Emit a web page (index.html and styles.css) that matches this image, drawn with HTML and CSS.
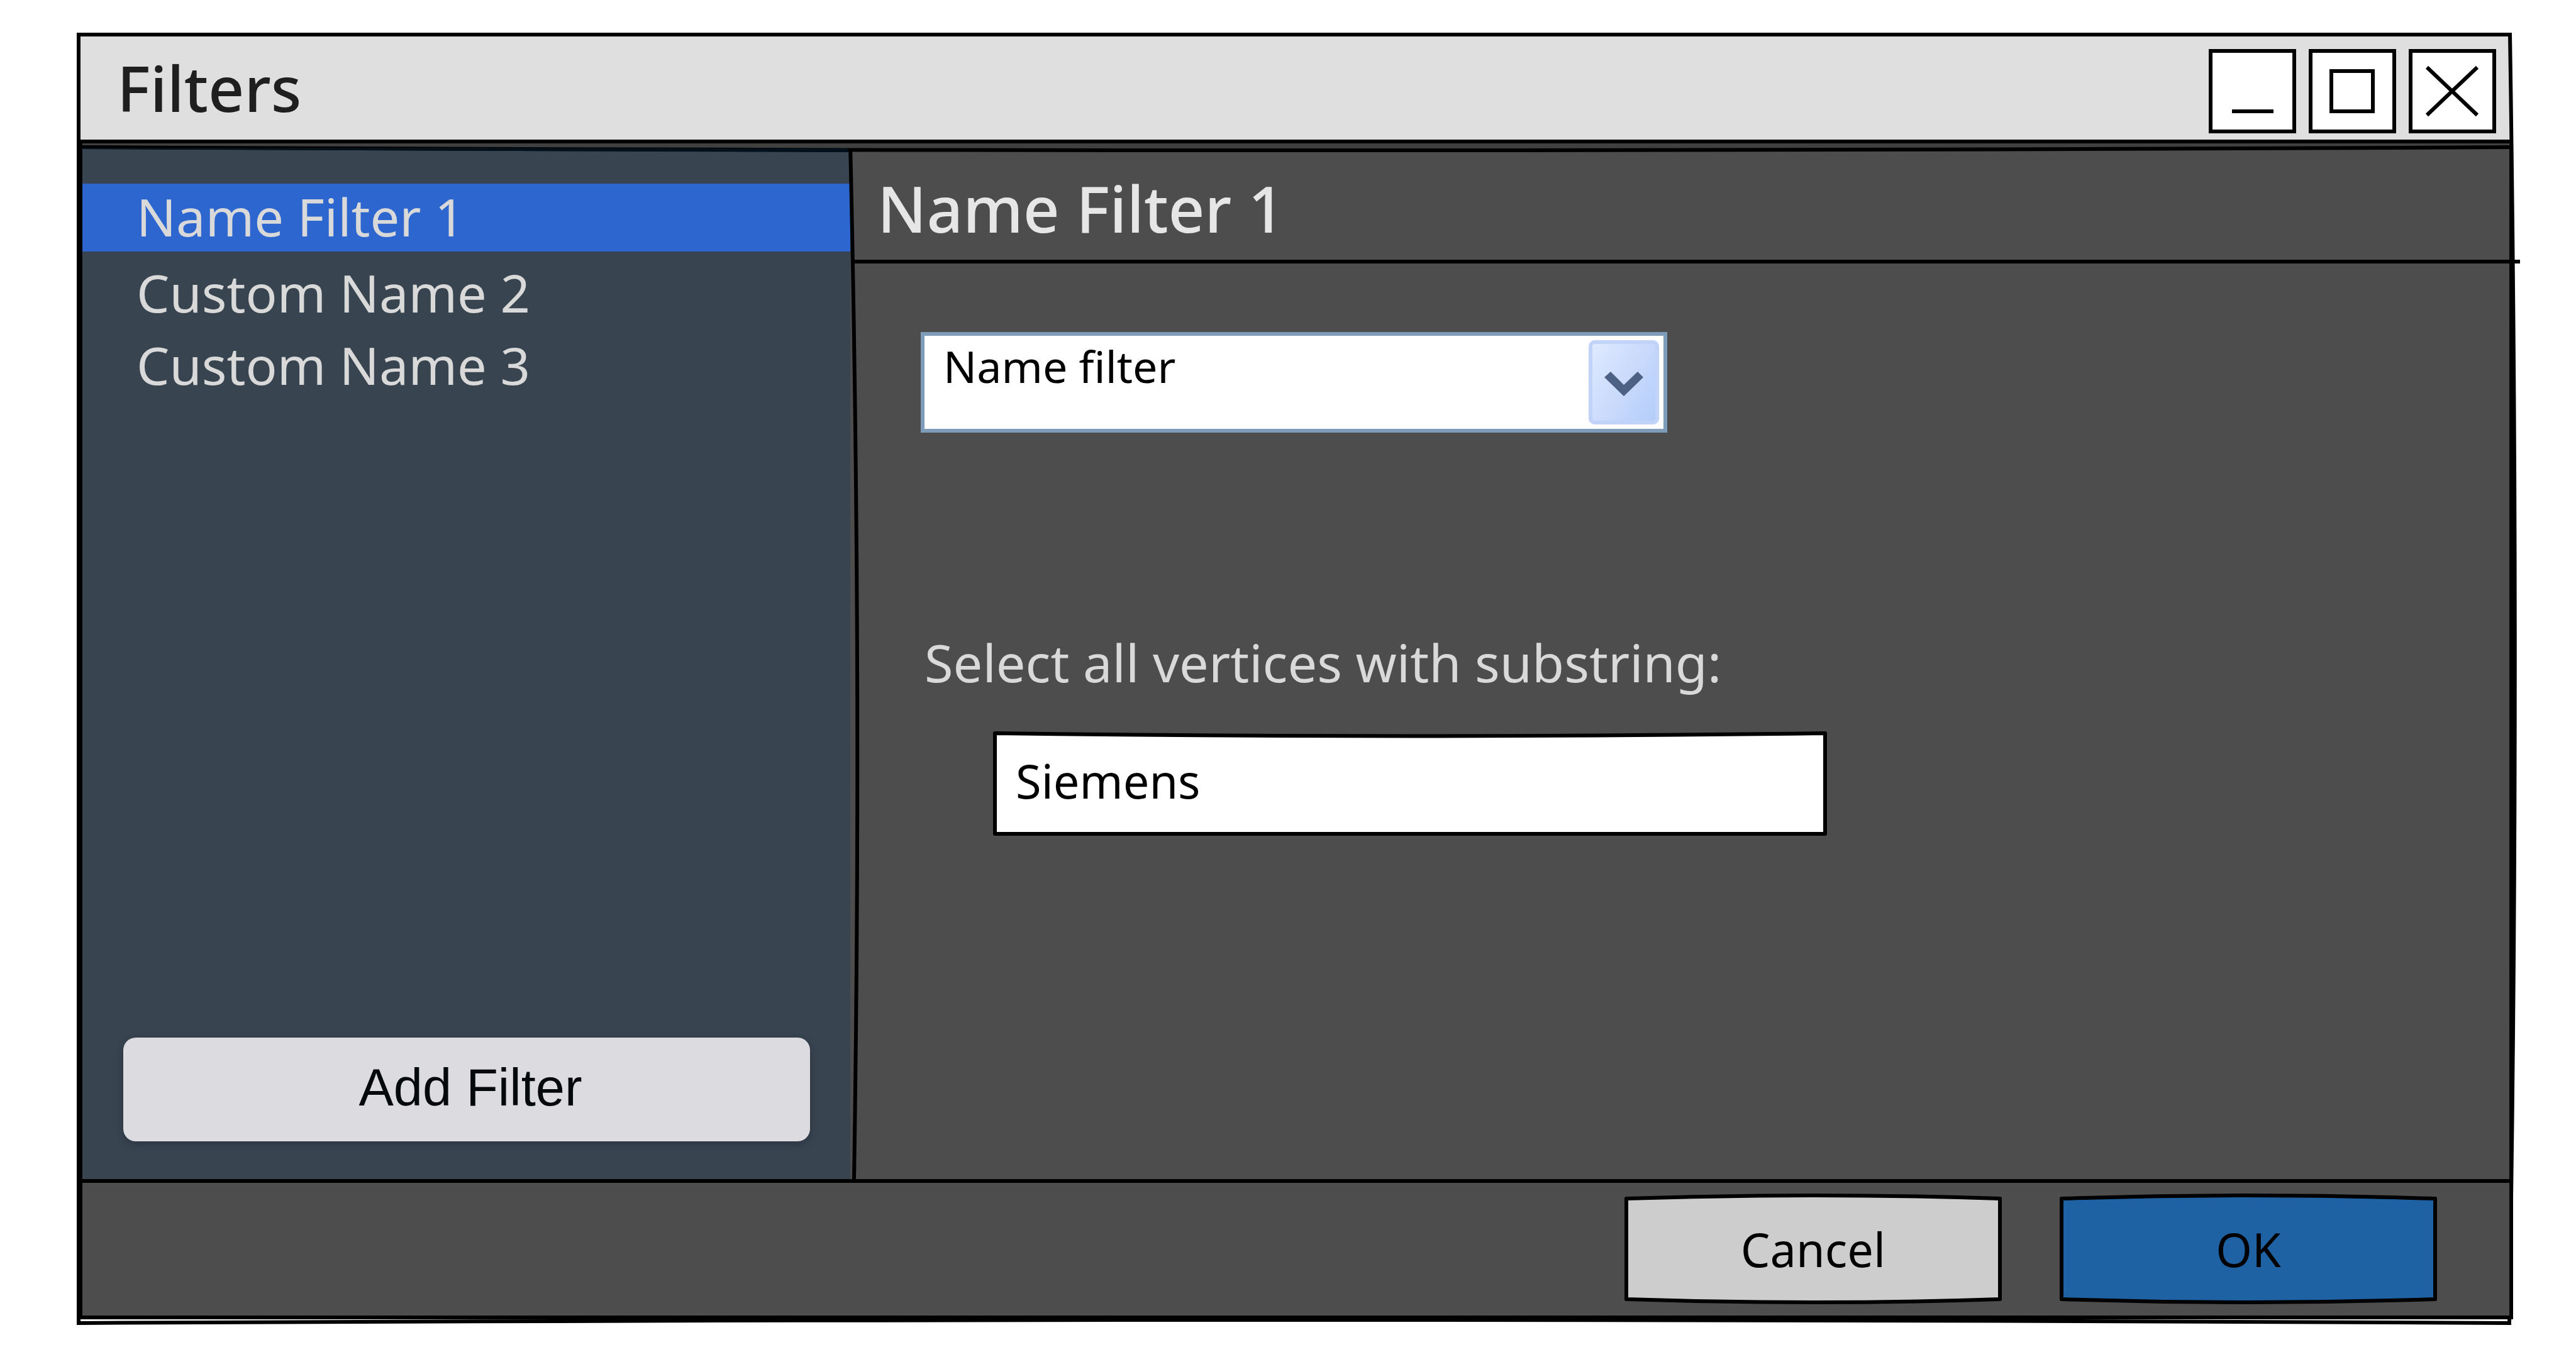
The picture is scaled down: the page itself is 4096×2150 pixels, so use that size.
FILE: index.html
```html
<!DOCTYPE html>
<html lang="en">
<head>
  <meta charset="utf-8">
  <meta name="viewport" content="width=device-width, initial-scale=1">
  <title>Filters</title>
  <link rel="stylesheet" href="styles.css">
</head>
<body>
  <div class="window" role="dialog" aria-labelledby="window-title">
    <svg class="frame" viewBox="0 0 3880 2056" preserveAspectRatio="none" aria-hidden="true">
      <path class="stroke" d="M3 3H3869Q3885 1028 3868 2052Q1934 2042 3 2052Z"/>
    </svg>

    <header class="titlebar">
      <h1 class="titlebar-text" id="window-title">Filters</h1>
      <div class="window-controls">
        <button class="window-control" type="button" aria-label="Minimize">
          <svg viewBox="0 0 139 134" aria-hidden="true"><path d="M37 99H103"/></svg>
        </button>
        <button class="window-control" type="button" aria-label="Maximize">
          <svg viewBox="0 0 139 134" aria-hidden="true"><path d="M36 35H102V99H36Z"/></svg>
        </button>
        <button class="window-control" type="button" aria-label="Close">
          <svg viewBox="0 0 139 134" aria-hidden="true"><path d="M29 29L109 105M109 29L29 105"/></svg>
        </button>
      </div>
    </header>

    <div class="content">
      <svg class="content-edge" viewBox="0 0 3859 20" preserveAspectRatio="none" aria-hidden="true">
        <path class="edge-band" d="M0 0H3857V6Q1929 15 0 6Z"/>
        <path class="stroke" d="M-3 6Q1929 16 3862 6"/>
        <path class="edge-tint" d="M0 7L0 9Q600 12 1217 14V8L600 7Z"/>
      </svg>

      <div class="panes">
        <nav class="sidebar" aria-label="Filters">
          <ul class="filter-list">
            <li><button class="filter filter-selected" type="button" aria-current="true">Name Filter 1</button></li>
            <li><button class="filter" type="button">Custom Name 2</button></li>
            <li><button class="filter" type="button">Custom Name 3</button></li>
          </ul>
          <button class="add-filter" type="button">Add Filter</button>
        </nav>

        <main class="details">
          <svg class="splitter" viewBox="0 0 24 1647" preserveAspectRatio="none" aria-hidden="true">
            <path class="stroke" d="M8 0Q27 823 14 1647"/>
          </svg>
          <h2 class="details-title">Name Filter 1</h2>
          <form class="details-form">
            <div class="combo">
              <select class="combo-select" aria-label="Filter type">
                <option selected>Name filter</option>
              </select>
              <span class="combo-arrow" aria-hidden="true">
                <svg viewBox="0 0 112 134"><path d="M35 50L56 71L78 50L87 59L56 89L25 59Z"/></svg>
              </span>
            </div>
            <label class="field-label" for="substring">Select all vertices with substring:</label>
            <div class="text-field">
              <svg class="outline" viewBox="0 0 1326 166" preserveAspectRatio="none" aria-hidden="true">
                <path class="stroke" d="M3 3Q663 12 1323 3V163H3Z"/>
              </svg>
              <input class="text-input" id="substring" type="text" value="Siemens">
            </div>
          </form>
        </main>
      </div>

      <footer class="actions">
        <button class="action action-cancel" type="button">
          <svg class="outline" viewBox="0 0 600 176" preserveAspectRatio="none" aria-hidden="true">
            <path class="stroke" d="M3 8Q300 -2 597 8V168Q300 178 3 168Z"/>
          </svg>
          <span class="action-text">Cancel</span>
        </button>
        <button class="action action-ok" type="submit">
          <svg class="outline" viewBox="0 0 600 176" preserveAspectRatio="none" aria-hidden="true">
            <path class="stroke" d="M3 8Q300 -2 597 8V168Q300 178 3 168Z"/>
          </svg>
          <span class="action-text">OK</span>
        </button>
      </footer>
    </div>
  </div>
</body>
</html>
```

FILE: styles.css
```css
*,
*::before,
*::after {
  box-sizing: border-box;
}

body {
  margin: 0;
  padding: 52px 94px 42px 122px;
  background: #fff;
  color: #000;
  font-family: "Noto Sans", "Open Sans", sans-serif;
}

h1,
h2,
ul {
  margin: 0;
  padding: 0;
}

button,
input,
select {
  margin: 0;
  border: 0;
  border-radius: 0;
  color: inherit;
  font: inherit;
}

svg {
  display: block;
  overflow: visible;
}

/* Hand-drawn outlines */
.stroke {
  fill: none;
  stroke: #000;
  stroke-width: 6px;
  stroke-linejoin: round;
  vector-effect: non-scaling-stroke;
}

.window {
  position: relative;
  display: flex;
  flex-direction: column;
  min-height: calc(100vh - 94px);
  padding: 6px 6px 10px 3px;
}

.frame {
  position: absolute;
  inset: 0;
  width: 100%;
  height: 100%;
  pointer-events: none;
}

.frame .stroke {
  stroke-linejoin: miter;
}

/* Title bar */
.titlebar {
  display: flex;
  align-items: center;
  justify-content: space-between;
  height: 170px;
  margin-left: 3px;
  margin-right: 2px;
  padding: 0 25px 0 58px;
  border-bottom: 6px solid #000;
  background: #dfdfdf;
}

.titlebar-text {
  padding-bottom: 2px;
  color: #1f1f1f;
  font-size: 100px;
  font-weight: 500;
  line-height: 136px;
}

.window-controls {
  display: flex;
  gap: 20px;
  padding-top: 10px;
}

.window-control {
  width: 139px;
  height: 134px;
  padding: 0;
  background: #fff;
  outline: 6px solid #000;
  outline-offset: -6px;
}

.window-control svg {
  width: 139px;
  height: 134px;
  fill: none;
  stroke: #000;
  stroke-width: 6px;
}

/* Content */
.content {
  position: relative;
  display: flex;
  flex: 1;
  flex-direction: column;
  border: 6px solid #000;
  border-top: 0;
  background: #4d4d4d;
}

.content-edge {
  position: absolute;
  z-index: 1;
  top: 0;
  left: 0;
  width: 100%;
  height: 20px;
}

.edge-band {
  fill: #404040;
}

.edge-tint {
  fill: #02101b;
}

.panes {
  display: flex;
  flex: 1;
}

/* Sidebar */
.sidebar {
  display: flex;
  flex: 0 0 1221px;
  flex-direction: column;
  justify-content: space-between;
  padding: 64px 0 60px;
  background: #38444f;
}

.filter-list {
  display: flex;
  flex-direction: column;
  gap: 7px;
  list-style: none;
}

.filter {
  display: block;
  width: 100%;
  padding: 0 0 4px 86px;
  background: none;
  color: #d9d9d9;
  font-size: 83px;
  line-height: 104px;
  text-align: left;
}

.filter-selected {
  margin-bottom: 6px;
  background: #2e66d0;
}

.add-filter {
  height: 165px;
  margin: 0 64px 0 65px;
  padding: 0 0 6px 12px;
  border-radius: 20px;
  background: #dcdbe0;
  box-shadow: 0 4px 12px #2c3444;
  color: #06090c;
  font-family: "Liberation Sans Narrow", "Liberation Sans", sans-serif;
  font-size: 83px;
}

/* Details pane */
.details {
  position: relative;
  flex: 1;
}

.splitter {
  position: absolute;
  top: 0;
  left: -8px;
  width: 24px;
  height: 100%;
}

.details-title {
  height: 191px;
  margin: 0 -17px 0 6px;
  padding: 30px 0 0 37px;
  border-bottom: 6px solid #000;
  color: #e6e6e6;
  font-size: 101px;
  font-weight: 500;
  line-height: 146px;
}

.details-form {
  padding: 109px 112px 0;
}

.combo {
  position: relative;
  width: 1187px;
}

.combo-select {
  display: block;
  width: 100%;
  height: 160px;
  padding: 0 130px 54px 30px;
  border: 6px solid #7c9cb9;
  background: #fff;
  font-size: 70px;
  appearance: none;
}

.combo-arrow {
  position: absolute;
  top: 13px;
  right: 13px;
  width: 112px;
  height: 134px;
  border-radius: 10px;
  background: linear-gradient(120deg, #e1ecff, #cddcfc 45%, #b6cffa 90%, #aec8f0);
  box-shadow: inset 0 0 0 6px #c1d3f8;
  pointer-events: none;
}

.combo-arrow path {
  fill: #4d6185;
}

.field-label {
  display: block;
  margin-top: 309px;
  padding-left: 6px;
  color: #d9d9d9;
  font-size: 83px;
  line-height: 112px;
}

.text-field {
  position: relative;
  width: 1326px;
  margin: 54px 0 0 115px;
}

.outline {
  position: absolute;
  inset: 0;
  width: 100%;
  height: 100%;
}

.text-field .stroke {
  fill: #fff;
}

.text-input {
  position: relative;
  display: block;
  width: 100%;
  height: 166px;
  padding: 0 36px 10px;
  background: none;
  font-size: 74px;
}

/* Footer */
.actions {
  display: flex;
  justify-content: flex-end;
  gap: 92px;
  padding: 17px 115px 18px;
  border-top: 6px solid #000;
}

.action {
  position: relative;
  width: 600px;
  height: 176px;
  padding: 0;
  background: none;
  font-size: 74px;
}

.action-text {
  position: relative;
}

.action-cancel .stroke {
  fill: #cdcdcd;
}

.action-ok .stroke {
  fill: #1e62a4;
}
```
